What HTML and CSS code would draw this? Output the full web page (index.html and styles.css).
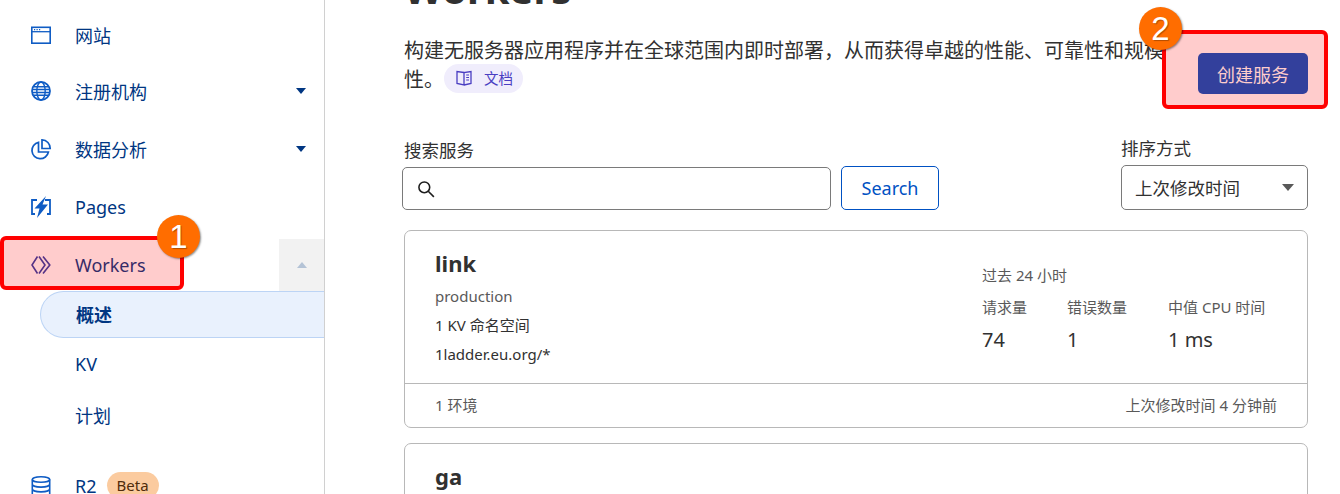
FILE: index.html
```html
<!DOCTYPE html>
<html lang="zh-CN">
  <head>
    <meta charset="UTF-8" />
    <title>Workers</title>
    <link rel="stylesheet" href="styles.css">
  </head>

  <body>
    <div class="page">
      <nav class="sidebar">
        <a class="nav-row first">
          <svg class="nav-icon" viewBox="0 0 20 20"><rect x="0.800" y="2.300" width="18.400" height="15.900" fill="none" stroke="currentColor" stroke-width="1.600"/><path d="M1 6.700h18" stroke="currentColor" stroke-width="1.300"/><path d="M3 4.600h1.200M5.500 4.600h1.200M8 4.600h1.200" stroke="currentColor" stroke-width="1.200"/></svg>
          <span>网站</span>
        </a>
        <a class="nav-row">
          <svg class="nav-icon" viewBox="0 0 20 20" fill="none" stroke="currentColor"><circle cx="10" cy="10" r="9" stroke-width="1.800"/><ellipse cx="10" cy="10" rx="4.200" ry="9" stroke-width="1.400"/><path d="M2.500 5.800h15M2.500 14.200h15" stroke-width="1.400"/><path d="M1 8.500h18M1 11.500h18" stroke-width="1.300"/></svg>
          <span>注册机构</span>
          <i class="caret"></i>
        </a>
        <a class="nav-row loose">
          <svg class="nav-icon" viewBox="0 0 20 20" fill="none" stroke="currentColor" stroke-width="1.700"><path d="M7.500 3.300A8.300 8.300 0 1 0 17.400 13H7.500z"/><path d="M11 .9A8.300 8.300 0 0 1 19.200 9.500H11z"/></svg>
          <span>数据分析</span>
          <i class="caret"></i>
        </a>
        <a class="nav-row loose">
          <svg class="nav-icon pages-icon" viewBox="0 0 20 22"><path d="M6 4H1v14h3M14 4h5v14h-3" fill="none" stroke="currentColor" stroke-width="1.800"/><path d="M15 0 3.500 12.500H8.500L6 22 17 8.500H11.500z" fill="currentColor"/></svg>
          <span>Pages</span>
        </a>
        <a class="nav-row loose workers">
          <svg class="nav-icon" viewBox="0 0 20 20" fill="none" stroke="#2b3fa8" stroke-width="1.600"><path d="M6.500 1.500 1 10l5.500 8.500"/><path d="M8 1.500 14 10l-6 8.500"/><path d="M12 1.500 18.800 10 12 18.500"/></svg>
          <span>Workers</span>
          <span class="collapse"><i class="caret up"></i></span>
        </a>
        <ul class="subnav">
          <li class="current">概述</li>
          <li>KV</li>
          <li>计划</li>
        </ul>
        <a class="nav-row r2">
          <svg class="nav-icon" viewBox="0 0 20 20" fill="none" stroke="currentColor" stroke-width="1.600"><ellipse cx="10" cy="3.500" rx="8.700" ry="2.800"/><path d="M1.300 3.500V18c0 1.600 3.900 2.800 8.700 2.800s8.700-1.200 8.700-2.800V3.500M1.300 8.300c0 1.600 3.900 2.800 8.700 2.800s8.700-1.200 8.700-2.800M1.300 13.100c0 1.600 3.900 2.800 8.700 2.800s8.700-1.200 8.700-2.800"/></svg>
          <span>R2</span>
          <span class="beta">Beta</span>
        </a>
      </nav>

      <main class="content">
        <h1>Workers</h1>
        <div class="intro">
          <p>构建无服务器应用程序并在全球范围内即时部署，从而获得卓越的性能、可靠性和规模性。<a class="docs">
            <svg viewBox="0 0 16 16" fill="none" stroke="currentColor" stroke-width="1.300"><path d="M8 2.500 1 1.500v12l7 1.500V2.500l7-1v12L8 15"/><path d="M10.200 5h2.800M10.200 7.500h2.800M10.200 10h2.800" stroke-width="1.100"/></svg>
            文档</a></p>
          <button class="create">创建服务</button>
        </div>

        <div class="filters">
          <div class="search">
            <label>搜索服务</label>
            <div class="search-line">
              <div class="search-box">
                <svg viewBox="0 0 16 16" fill="none" stroke="#1d1d1d" stroke-width="1.400"><circle cx="6.500" cy="6.500" r="4.800"/><path d="M10 10l5 5"/></svg>
              </div>
              <button class="search-btn">Search</button>
            </div>
          </div>
          <div class="sort">
            <label>排序方式</label>
            <div class="sort-box">上次修改时间<i class="caret grey"></i></div>
          </div>
        </div>

        <article class="card">
          <div class="card-body">
            <div class="card-info">
              <h3>link</h3>
              <p class="env">production</p>
              <p>1 KV 命名空间</p>
              <p>1ladder.eu.org/*</p>
            </div>
            <div class="stats">
              <p class="period">过去 24 小时</p>
              <div class="stat-cols">
                <div class="stat"><p>请求量</p><b>74</b></div>
                <div class="stat"><p>错误数量</p><b>1</b></div>
                <div class="stat"><p>中值 CPU 时间</p><b>1 ms</b></div>
              </div>
            </div>
          </div>
          <div class="card-foot">
            <span>1 环境</span>
            <span>上次修改时间 4 分钟前</span>
          </div>
        </article>

        <article class="card">
          <div class="card-body">
            <div class="card-info">
              <h3>ga</h3>
            </div>
          </div>
        </article>
      </main>

      <div class="mark mark-workers"></div>
      <div class="mark mark-create"></div>
      <div class="badge badge-one">1</div>
      <div class="badge badge-two">2</div>
    </div>
  </body>
</html>
```

FILE: styles.css
```css
* {
  box-sizing: border-box;
}

body {
  margin: 0;
  background-color: #fff;
  color: #313131;
  font-family: "Noto Sans", "Noto Sans CJK SC", sans-serif;
}

p {
  margin: 0;
}

.page {
  position: relative;
  display: flex;
  width: 1340px;
  height: 494px;
  overflow: hidden;
}

/* sidebar */
.sidebar {
  flex: 0 0 325px;
  height: 494px;
  border-right: 1px solid #d0d0d0;
  color: #003682;
  font-size: 18px;
}

.nav-row {
  display: flex;
  align-items: center;
  height: 52px;
  margin-top: 4px;
  padding-left: 31px;
}

.nav-row.first {
  margin-top: 9px;
}

.nav-row.loose {
  margin-top: 6px;
}

.nav-row span:first-of-type {
  margin-left: 24px;
}

.nav-icon {
  flex: none;
  width: 20px;
  height: 20px;
  color: #0f5cc4;
  overflow: visible;
}

.pages-icon {
  height: 22px;
}

.caret {
  width: 0;
  height: 0;
  margin-left: auto;
  margin-right: 18px;
  border-left: 5.500px solid transparent;
  border-right: 5.500px solid transparent;
  border-top: 6px solid #003682;
}

.caret.up {
  margin: 0;
  border-top: 0;
  border-bottom: 6px solid #b4c3d6;
}

.caret.grey {
  margin-right: 0;
  border-left-width: 6.500px;
  border-right-width: 6.500px;
  border-top: 7px solid #595959;
}

.workers .collapse {
  display: flex;
  align-items: center;
  justify-content: center;
  align-self: stretch;
  width: 45px;
  margin-left: auto;
  background-color: #f2f2f2;
}

.subnav {
  margin: 0 0 20.500px;
  padding: 0;
  list-style: none;
  font-size: 18px;
}

.subnav li {
  display: flex;
  align-items: center;
  height: 47px;
  margin: 0 0 3.500px 40px;
  padding: 0 0 2px 35px;
}

.subnav .current {
  border: 1px solid #bcd4f5;
  border-right: 0;
  border-radius: 24px 0 0 24px;
  background-color: #e9f1fd;
  font-weight: 700;
}

.nav-row.r2 {
  margin-top: 0;
}

.beta {
  margin-left: 10px;
  padding: 0 10px;
  height: 27px;
  line-height: 27px;
  border-radius: 14px;
  background-color: #fbcb9f;
  color: #4f2c0c;
  font-size: 15px;
}

/* main column */
.content {
  flex: 0 0 904px;
  margin-left: 79px;
}

h1 {
  margin: -36px 0 0;
  font-size: 40px;
  line-height: 50px;
  font-weight: 700;
  color: #313131;
}

.intro {
  display: flex;
  align-items: flex-start;
  justify-content: space-between;
  margin-top: 22px;
}

.intro p {
  width: 770px;
  font-size: 20px;
  line-height: 29px;
}

.docs {
  display: inline-flex;
  align-items: center;
  gap: 12px;
  height: 29px;
  margin: -3px 0 -3px 0;
  padding: 0 10px 0 12px;
  border-radius: 15px;
  background-color: #f0edfc;
  color: #4a3ec2;
  font-size: 14.500px;
  vertical-align: 1px;
}

.docs svg {
  width: 16px;
  height: 16px;
}

.create {
  width: 110px;
  height: 41px;
  margin-top: 17px;
  border: 0;
  border-radius: 5px;
  background-color: #0051c3;
  color: #fff;
  font: inherit;
  font-size: 18px;
}

.filters {
  display: flex;
  justify-content: space-between;
  margin-top: 41px;
}

label {
  display: block;
  height: 32px;
  font-size: 17.500px;
  line-height: 30px;
}

.search-line {
  display: flex;
  gap: 10px;
  margin-left: -2px;
}

.search-box {
  display: flex;
  align-items: center;
  width: 429px;
  height: 43px;
  padding-left: 14px;
  border: 1px solid #7a7a7a;
  border-radius: 5px;
}

.search-box svg {
  width: 18px;
  height: 18px;
}

.search-btn {
  width: 98px;
  height: 44px;
  margin-top: -1px;
  border: 1px solid #0051c3;
  border-radius: 5px;
  background-color: #fff;
  color: #0051c3;
  font: inherit;
  font-size: 18px;
}

.sort label {
  height: 30px;
  line-height: 26px;
}

.sort-box {
  display: flex;
  align-items: center;
  justify-content: space-between;
  width: 187px;
  height: 45px;
  padding: 0 13px;
  border: 1px solid #7a7a7a;
  border-radius: 5px;
  font-size: 17.500px;
}

/* service cards */
.card {
  margin-top: 15px;
  border: 1px solid #b8b8b8;
  border-radius: 7px;
}

.filters + .card {
  margin-top: 20px;
}

.card-body {
  display: flex;
  height: 152px;
  padding-left: 30px;
}

.card-info {
  flex: 0 0 547px;
  font-size: 15px;
}

.card-info h3 {
  margin: 15px 0 0;
  font-size: 22px;
  line-height: 34px;
  font-weight: 700;
}

.card-info p {
  height: 29px;
  line-height: 29px;
}

.card-info .env {
  margin-top: 2px;
  color: #595959;
}

.stats {
  margin-top: 32px;
  font-size: 15px;
  color: #595959;
}

.period {
  line-height: 24px;
}

.stat-cols {
  display: flex;
  margin-top: 8px;
}

.stat:nth-child(1) {
  width: 85px;
}

.stat:nth-child(2) {
  width: 101px;
}

.stat p {
  line-height: 24px;
}

.stat b {
  display: block;
  margin-top: 4px;
  font-size: 20px;
  font-weight: 400;
  line-height: 34px;
  color: #313131;
}

.card-foot {
  display: flex;
  justify-content: space-between;
  height: 44px;
  padding: 0 30px;
  border-top: 1px solid #b8b8b8;
  color: #595959;
  font-size: 15px;
  line-height: 43px;
}

/* annotations drawn over the page */
.mark {
  position: absolute;
  border: 4px solid #f00;
  border-radius: 6px;
  background-color: rgba(255, 0, 0, 0.2);
}

.mark-workers {
  left: 0;
  top: 236px;
  width: 184px;
  height: 54px;
}

.mark-create {
  left: 1162px;
  top: 30px;
  width: 166px;
  height: 79px;
}

.badge {
  position: absolute;
  width: 43px;
  height: 43px;
  border-radius: 50%;
  background-color: #ff6d00;
  box-shadow: 1px 1px 2px rgba(0, 0, 0, 0.45);
  color: #fff;
  font-family: "Liberation Sans", sans-serif;
  font-size: 33px;
  line-height: 43px;
  text-align: center;
  text-shadow: 1px 1px 1px rgba(0, 0, 0, 0.3);
}

.badge-one {
  left: 157px;
  top: 215px;
}

.badge-two {
  left: 1139px;
  top: 7px;
}
```
